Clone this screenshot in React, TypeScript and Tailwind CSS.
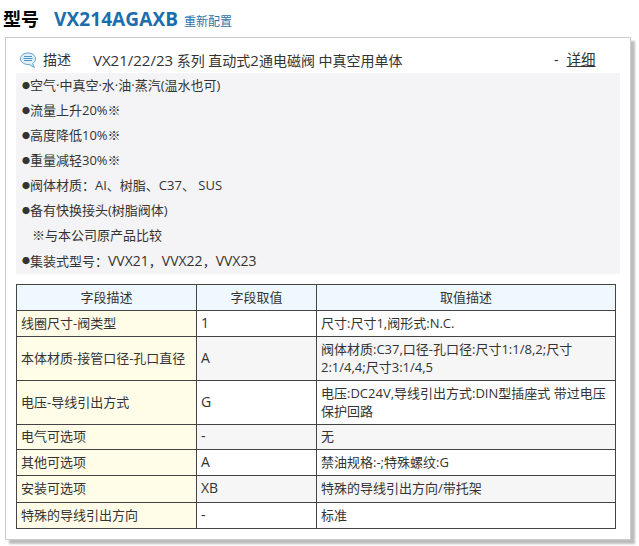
const font = "[font-family:'Open_Sans','Noto_Sans_CJK_SC',sans-serif]";

const rows = [
  { name: "线圈尺寸-阀类型", value: "1", desc: "尺寸:尺寸1,阀形式:N.C.", h: "h-[26px]" },
  { name: "本体材质-接管口径-孔口直径", value: "A", desc: "阀体材质:C37,口径-孔口径:尺寸1:1/8,2;尺寸2:1/4,4;尺寸3:1/4,5", h: "h-[44px]" },
  { name: "电压-导线引出方式", value: "G", desc: "电压:DC24V,导线引出方式:DIN型插座式 带过电压保护回路", h: "h-[44px]" },
  { name: "电气可选项", value: "-", desc: "无", h: "h-[25px]" },
  { name: "其他可选项", value: "A", desc: "禁油规格:-;特殊螺纹:G", h: "h-[26px]" },
  { name: "安装可选项", value: "XB", desc: "特殊的导线引出方向/带托架", h: "h-[27px]" },
  { name: "特殊的导线引出方向", value: "-", desc: "标准", h: "h-[26px]" },
];

const Feature = ({ children }: { children: React.ReactNode }) => (
  <div className="h-[25px] leading-[25px] flex items-center">
    <span className="w-[8px] text-[8px] leading-[8px]">●</span>
    <span>{children}</span>
  </div>
);

export default function App() {
  return (
    <div className={`${font} w-[639px] h-[546px] bg-white text-[13px] text-[#333] overflow-hidden`}>
      <div className="flex items-baseline h-[37px] pl-[3px] pt-[7px]">
        <span className="text-[18px] leading-[24px] font-bold text-black">型号</span>
        <span className="ml-[15px] text-[19px] leading-[24px] font-bold text-[#1b6eae] tracking-[0.1px]">VX214AGAXB</span>
        <span className="ml-[6px] text-[12px] text-[#2f72a8]">重新配置</span>
      </div>
      <div className="ml-[5px] w-[626px] h-[503px] border border-[#ccc] bg-white shadow-[4px_4px_2px_#bdbdbd] pl-[10px] pt-[11px]">
        <div className="flex items-center h-[22px] leading-[22px] text-[14px]">
          <svg viewBox="0 0 16 17" className="w-[16px] h-[17px] ml-[4px]" fill="none">
            <path d="M8 1C12 1 15.500 3.300 15.500 6.800 15.500 9 14 10.700 12.500 11.500L14.500 15.500 9.500 12.600C5 12.800.5 10.500.5 6.800.5 3.300 4 1 8 1z" fill="#e3f0f9" stroke="#5b9fc9" />
            <path d="M4 4.500h8M3.500 6.500h9M4 8.500h8" stroke="#4f93c0" />
          </svg>
          <span className="ml-[7px] w-[50px]">描述</span>
          <span className="w-[461px]">
            <span className="text-[15px]">VX21/22/23</span> 系列 直动式<span className="text-[15px]">2</span>通电磁阀 中真空用单体
          </span>
          <span>-</span>
          <span className="ml-[8px] underline text-[14.500px]">详细</span>
        </div>
        <div className="mt-[2px] w-[604px] h-[201px] bg-[#f4f4f6] pl-[6px]">
          <Feature>空气·中真空·水·油·蒸汽(温水也可)</Feature>
          <Feature>流量上升20%※</Feature>
          <Feature>高度降低10%※</Feature>
          <Feature>重量减轻30%※</Feature>
          <Feature>阀体材质：AI、树脂、C37、 SUS</Feature>
          <Feature>备有快换接头(树脂阀体)</Feature>
          <div className="h-[25px] leading-[25px] pl-[10px]">※与本公司原产品比较</div>
          <Feature>
            集装式型号：<span className="text-[14px]">VVX21</span>，<span className="text-[14px]">VVX22</span>，<span className="text-[14px]">VVX23</span>
          </Feature>
        </div>
        <table className="mt-[10px] w-[600px] table-fixed border-collapse border border-[#999]">
          <colgroup>
            <col className="w-[180px]" />
            <col className="w-[120px]" />
            <col />
          </colgroup>
          <thead>
            <tr className="h-[26px] bg-[#eef8fe]">
              <th className="border border-[#444] font-normal">字段描述</th>
              <th className="border border-[#444] font-normal">字段取值</th>
              <th className="border border-[#444] font-normal">取值描述</th>
            </tr>
          </thead>
          <tbody>
            {rows.map((r, i) => (
              <tr key={r.name} className={r.h}>
                <td className="border border-[#444] bg-[#fffde8] px-[4px] pb-[2px] leading-[18px] whitespace-nowrap">{r.name}</td>
                <td className={`border border-[#444] px-[4px] pb-[2px] text-[14px] leading-[18px] ${i % 2 ? "bg-[#f6f6f6]" : "bg-white"}`}>{r.value}</td>
                <td className={`border border-[#444] px-[4px] pb-[2px] leading-[18px] ${i % 2 ? "bg-[#f6f6f6]" : "bg-white"}`}>{r.desc}</td>
              </tr>
            ))}
          </tbody>
        </table>
      </div>
    </div>
  );
}
